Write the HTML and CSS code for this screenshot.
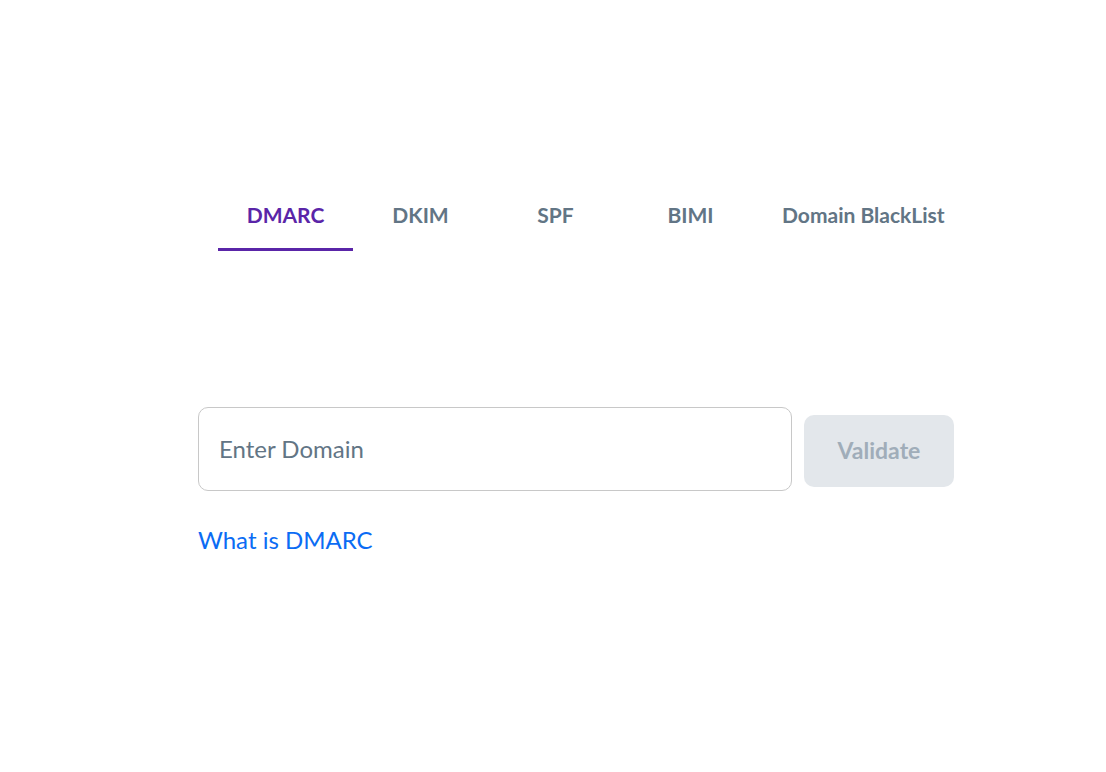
FILE: index.html
```html
<!DOCTYPE html>
<html lang="en">
<head>
  <meta charset="UTF-8">
  <title>Domain Checker</title>
  <link rel="stylesheet" href="styles.css">
</head>
<body>

  <div class="page">
    <nav class="tabs">
      <a class="tab active" href="#">DMARC</a>
      <a class="tab" href="#">DKIM</a>
      <a class="tab" href="#">SPF</a>
      <a class="tab" href="#">BIMI</a>
      <a class="tab" href="#">Domain BlackList</a>
    </nav>

    <div class="checker">
      <div class="form-row">
        <input type="text" class="domain-input" placeholder="Enter Domain">
        <button class="validate-btn" disabled>Validate</button>
      </div>
      <a class="help-link" href="#">What is DMARC</a>
    </div>
  </div>

</body>
</html>
```

FILE: styles.css
```css
body {
  margin: 0;
  font-family: Lato, 'Open Sans', sans-serif;
  background-color: #fff;
}

.page {
  padding: 180px 0 0 198px;
  width: 756px;
}

.tabs {
  display: flex;
  padding-left: 20px;
}

.tab {
  flex-shrink: 0;
  min-width: 135px;
  box-sizing: border-box;
  padding: 0 24px;
  height: 71px;
  display: flex;
  align-items: center;
  justify-content: center;
  font-size: 21px;
  font-weight: 700;
  color: #627585;
  text-decoration: none;
  border-bottom: 3px solid transparent;
  white-space: nowrap;
}

.tab.active {
  color: #5a25a8;
  border-bottom-color: #5a25a8;
}

.checker {
  margin-top: 156px;
}

.form-row {
  display: flex;
  align-items: center;
  gap: 12px;
}

.domain-input {
  width: 594px;
  height: 84px;
  box-sizing: border-box;
  padding: 0 20px 2px;
  border: 1px solid #c8c8c8;
  border-radius: 10px;
  font-family: Lato, sans-serif;
  font-size: 24px;
  color: #333;
  outline: none;
}

.domain-input::placeholder {
  color: #627585;
}

.validate-btn {
  width: 150px;
  height: 72px;
  margin-top: 4px;
  padding-bottom: 3px;
  border: none;
  border-radius: 10px;
  background-color: #e3e7eb;
  color: #a0adb9;
  font-family: Lato, sans-serif;
  font-size: 23px;
  font-weight: 700;
}

.help-link {
  display: inline-block;
  margin-top: 34px;
  font-size: 24px;
  color: #0b6cf4;
  text-decoration: none;
}
```
